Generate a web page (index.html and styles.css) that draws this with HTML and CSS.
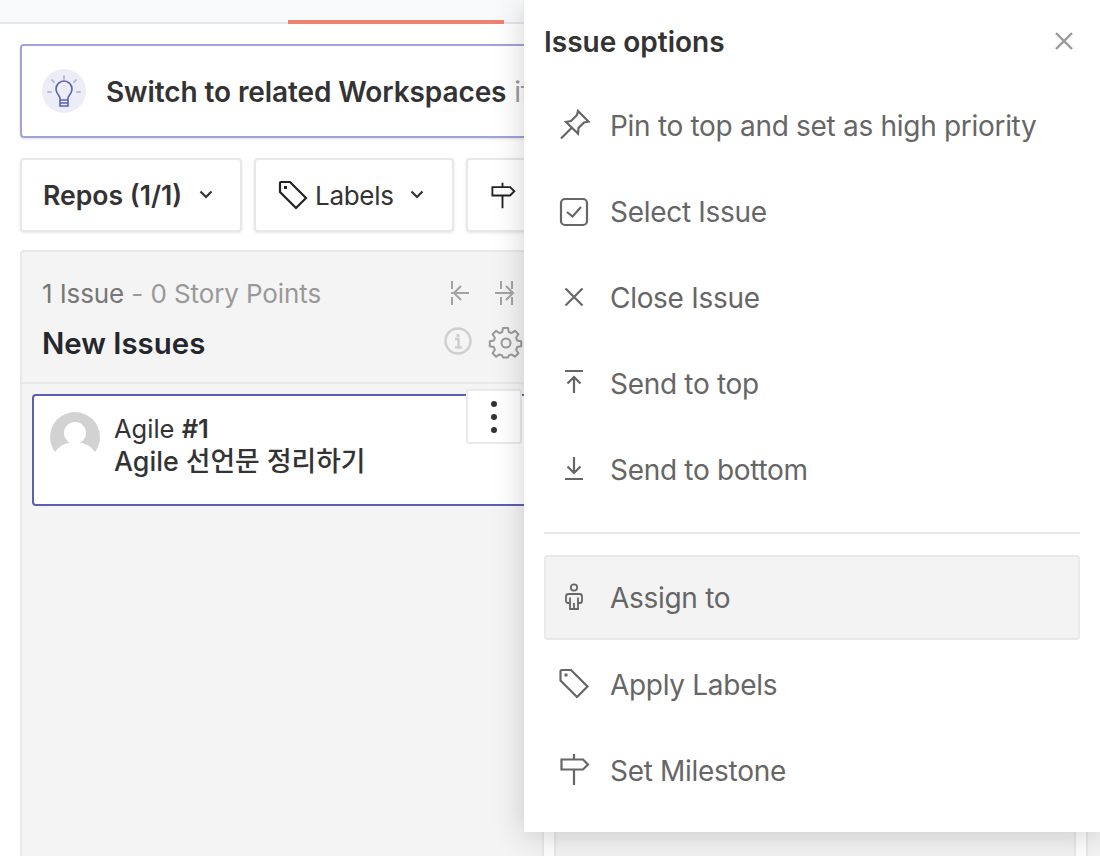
FILE: index.html
```html
<!DOCTYPE html>
<html lang="en">
<head>
<meta charset="utf-8">
<title>Issue options</title>
<link rel="stylesheet" href="styles.css">
</head>
<body>
<div class="page">
  <div class="tabbar"><div class="tab-active"></div></div>
  <main class="main">
    <div class="banner">
      <span class="bulb">
        <svg viewBox="0 0 44 44" width="44" height="44"><circle cx="22" cy="22" r="22" fill="#ecedf7"/><path d="M22 7v3M10 11l2 2M34 11l-2 2M6 23h3M35 23h3" stroke="#b9bbe2" stroke-width="2" fill="none" stroke-linecap="round"/><path d="M18 31v-2c0-2-4-4-4-9a8 8 0 0 1 16 0c0 5-4 7-4 9v2zM18 31v6h8v-6M18 34h8" stroke="#5c61b8" stroke-width="1.6" fill="none"/></svg>
      </span>
      <span class="banner-text"><strong>Switch to related Workspaces</strong> if</span>
    </div>
    <div class="filters">
      <div class="filter filter-repos"><strong>Repos (1/1)</strong><svg class="chev" viewBox="0 0 14 10" width="14" height="10"><path d="M1.5 1.5L7 7l5.500-5.500"/></svg></div>
      <div class="filter filter-labels">
        <svg class="ficon" viewBox="0 0 32 32" width="32" height="32"><path d="M4 3h9l16 16-10 10L3 13V4a1 1 0 0 1 1-1z"/><rect class="dot" x="7" y="7" width="3" height="3"/></svg>
        <span>Labels</span><svg class="chev" viewBox="0 0 14 10" width="14" height="10"><path d="M1.5 1.5L7 7l5.500-5.500"/></svg>
      </div>
      <div class="filter filter-miles">
        <svg class="ficon" viewBox="0 0 32 32" width="27" height="27"><path d="M16 1v5M16 16v15M4 6h21l5 5-5 5H4z"/></svg>
      </div>
    </div>
    <div class="board">
      <section class="column">
        <header class="col-head">
          <div class="col-row">
            <span class="col-count"><b>1 Issue</b> - 0 Story Points</span>
            <span class="col-tools">
              <svg viewBox="0 0 22 26" width="22" height="26"><path d="M3 1v8M3 12v2M3 17v8M20 13H5M12 6l-7 7 7 7"/></svg>
              <svg viewBox="0 0 22 26" width="22" height="26"><path d="M7 1v8M7 17v8M18 1v8M18 17v8M1 13h18M12 6l7 7-7 7"/></svg>
            </span>
          </div>
          <div class="col-row col-row-title">
            <h2>New Issues</h2>
            <span class="col-tools col-tools-b">
              <svg class="info" viewBox="0 0 28 28" width="28" height="28"><circle cx="14" cy="14" r="12.5"/><circle class="fill" cx="14" cy="8.5" r="1.8"/><path d="M11 12h3.500v8M11 20.500h7"/></svg>
              <svg class="gear" viewBox="0 0 32 32" width="32" height="32"><circle cx="16" cy="16" r="4.500"/><path d="M13.500 2h5l.8 4 2.700 1.100 3.400-2.300 3.500 3.500-2.300 3.400L27.700 14.500l4 .8v5l-4 .8-1.100 2.700 2.300 3.400-3.500 3.500-3.400-2.300-2.700 1.100-.8 2h-5l-.8-2-2.700-1.100-3.400 2.300-3.500-3.500 2.300-3.400-1.100-2.700-4-.8v-5l4-.8 1.100-2.800-2.300-3.400 3.500-3.500 3.400 2.300 2.700-1.100z" transform="translate(16 16) translate(-16.500 -17)"/></svg>
            </span>
          </div>
        </header>
        <div class="col-body">
          <article class="card">
            <svg class="avatar" viewBox="0 0 50 50" width="50" height="50"><circle cx="25" cy="25" r="25" fill="#d2d2d2"/><circle cx="25" cy="21" r="11" fill="#fff"/><ellipse cx="25" cy="50" rx="23" ry="20" fill="#fff"/></svg>
            <div class="card-text">
              <div class="card-ref">Agile <b>#1</b></div>
              <div class="card-title">Agile 선언문 정리하기</div>
            </div>
            <div class="card-menu"><i></i><i></i><i></i></div>
          </article>
        </div>
      </section>
      <section class="column"></section>
      <section class="column"></section>
    </div>
  </main>
</div>

<aside class="panel">
  <header class="panel-head">
    <h1>Issue options</h1>
    <svg class="panel-close" viewBox="0 0 18 18" width="18" height="18"><path d="M1 1l16 16M17 1L1 17"/></svg>
  </header>
  <ul class="menu">
    <li><svg viewBox="0 0 32 32"><path d="M20 1l10.500 10.500-4.500 1-5.500 5.500-.5 5.500L8 12l5-1 6-6zM13.500 18L3 28.500"/></svg><span>Pin to top and set as high priority</span></li>
    <li><svg viewBox="0 0 32 32"><rect x="3" y="3" width="26" height="26" rx="4"/><path d="M9 16l5.500 4.500L23 11"/></svg><span>Select Issue</span></li>
    <li><svg viewBox="0 0 32 32"><path d="M7.500 6.500l17 17M24.500 6.500l-17 17"/></svg><span>Close Issue</span></li>
    <li><svg viewBox="0 0 32 32"><path d="M7 3h18M16 25V9M9.500 15.500L16 9l6.500 6.500"/></svg><span>Send to top</span></li>
    <li><svg viewBox="0 0 32 32"><path d="M16 3v16M9.500 12.500L16 19l6.500-6.500M7 25h18"/></svg><span>Send to bottom</span></li>
  </ul>
  <hr class="menu-rule">
  <ul class="menu menu-b">
    <li class="active"><svg class="person" viewBox="0 0 32 32"><circle cx="16" cy="5.500" r="3.200"/><path d="M10.500 12h11a2.500 2.500 0 0 1 2.500 2.500V19a2 2 0 0 1-2 2h-2v6h-8v-6h-2a2 2 0 0 1-2-2v-4.500a2.500 2.500 0 0 1 2.500-2.500zM12 15.500V21M20 15.500V21M16 21v6"/></svg><span>Assign to</span></li>
    <li><svg viewBox="0 0 32 32"><path d="M4 1h9l16.500 16.500L19 28 2.500 11.500V2.500A1.500 1.500 0 0 1 4 1z"/><rect class="fill" x="6.500" y="4.500" width="3" height="3"/></svg><span>Apply Labels</span></li>
    <li><svg viewBox="0 0 32 32"><path d="M16-1v5M16 14.500V30M3.500 4.500H25l5 5-5 5H3.500z"/></svg><span>Set Milestone</span></li>
  </ul>
</aside>
</body>
</html>
```
FILE: styles.css
```css
* { box-sizing: border-box; }
html, body { margin: 0; height: 100%; overflow: hidden; background: #fff; }
body { font-family: Inter, "Noto Sans CJK KR", sans-serif; color: #333; }
svg { display: block; flex: none; overflow: visible; }

.page { width: 1100px; height: 856px; overflow: hidden; }
.tabbar { height: 24px; background: #f9fafb; border-bottom: 2px solid #e6e6ea; padding-left: 288px; display: flex; align-items: flex-end; }
.tab-active { width: 216px; height: 4px; margin-bottom: -2px; background: #ed8270; }

.main { padding: 20px 20px 0; }
.banner { height: 94px; width: 1060px; display: flex; align-items: center; gap: 20px; padding: 2px 0 0 20px; border: 2px solid #a0a3d8; border-radius: 4px; box-shadow: 0 1px 3px rgba(0,0,0,.12); font-size: 28px; letter-spacing: -0.1px; white-space: nowrap; overflow: hidden; color: #999; }
.banner strong { font-weight: 600; color: #333; }
.bulb { flex: none; margin-top: -2px; }

.filters { margin-top: 20px; display: flex; gap: 12px; height: 74px; }
.filter { display: flex; align-items: center; background: #fff; border: 2px solid #e8e8e8; border-radius: 4px; box-shadow: 0 1px 3px rgba(0,0,0,.1); font-size: 26px; letter-spacing: -0.3px; white-space: nowrap; }
.filter strong { font-size: 26.600px; font-weight: 600; letter-spacing: 0; }
.filter-repos { width: 222px; padding-left: 21px; gap: 17px; }
.filter-labels { width: 200px; padding-left: 21px; gap: 6px; }
.filter-labels .chev { margin-left: 10px; }
.filter-miles { width: 260px; padding-left: 21px; gap: 8px; }
.chev path { fill: none; stroke: #333; stroke-width: 2.200; }
.ficon path { fill: none; stroke: #222; stroke-width: 2.200; }
.ficon .dot { fill: #222; }

.board { margin-top: 18px; display: grid; grid-template-columns: 524px 522px 524px; gap: 10px; width: 1600px; height: 700px; }
.column { background: #f4f4f4; border: 2px solid #e9e9e9; border-radius: 4px; }
.col-head { height: 132px; border-bottom: 2px solid #e9e9e9; padding: 28px 0 0 20px; }
.col-row { display: flex; justify-content: space-between; align-items: center; height: 26px; padding-right: 26px; }
.col-row-title { margin-top: 20px; height: 34px; padding-right: 0; }
.col-count { font-size: 26px; letter-spacing: -0.1px; color: #999; white-space: nowrap; }
.col-count b { font-weight: 400; color: #777; }
.col-row h2 { margin: 0; font-size: 29.400px; font-weight: 600; color: #24272c; }
.col-tools { display: flex; gap: 23px; }
.col-tools path { fill: none; stroke: #a3a3a3; stroke-width: 2; }
.col-tools-b { gap: 18px; margin-right: 20px; }
.info circle, .info path { fill: none; stroke: #cfcfcf; stroke-width: 2.500; }
.info .fill { fill: #cfcfcf; stroke: none; }
.gear circle, .gear path { fill: none; stroke: #9a9a9a; stroke-width: 2; stroke-linejoin: round; }

.col-body { padding: 10px 10px 0; }
.card { position: relative; height: 112px; display: flex; gap: 14px; padding: 16px 16px 0; background: #fff; border: 2px solid #5a5fb5; border-radius: 4px; }
.card-text { font-size: 25.500px; line-height: 32px; color: #333; margin-top: 1px; white-space: nowrap; }
.card-ref b { font-weight: 600; }
.card-title { font-size: 26.800px; font-weight: 500; }
.card-menu { position: absolute; top: -7px; right: 8px; width: 56px; height: 55px; display: flex; flex-direction: column; align-items: center; justify-content: center; gap: 7px; background: #fff; border: 2px solid #eaeaea; border-radius: 3px; }
.card-menu i { width: 6px; height: 6px; border-radius: 50%; background: #333; }

.panel { position: absolute; left: 524px; top: 0; width: 576px; height: 832px; padding: 0 20px; background: #fff; box-shadow: 0 4px 30px rgba(0,0,0,.18); }
.panel-head { height: 83px; display: flex; align-items: center; justify-content: space-between; padding: 1px 7px 0 0; }
.panel-head h1 { margin: 0; font-size: 28px; font-weight: 600; color: #333; }
.panel-close { margin-top: -2px; }
.panel-close path { fill: none; stroke: #999; stroke-width: 2.400; }
.menu { list-style: none; margin: 0; padding: 0; }
.menu li { height: 86px; display: flex; align-items: center; gap: 20px; padding-left: 14px; font-size: 28px; letter-spacing: -0.3px; color: #666; white-space: nowrap; }
.menu svg { width: 32px; height: 32px; }
.menu svg path, .menu svg rect, .menu svg circle { fill: none; stroke: #666; stroke-width: 2.200; }
.menu svg .fill { fill: #666; stroke: none; }
.menu .person path, .menu .person circle { stroke-width: 1.800; }
.menu-rule { margin: 19px 0 21px; border: 0; border-top: 2px solid #e9e9e9; }
.menu li.active { height: 85px; background: #f3f3f3; border: 2px solid #e9e9e9; border-radius: 4px; padding-left: 12px; margin-bottom: 2px; }
```
